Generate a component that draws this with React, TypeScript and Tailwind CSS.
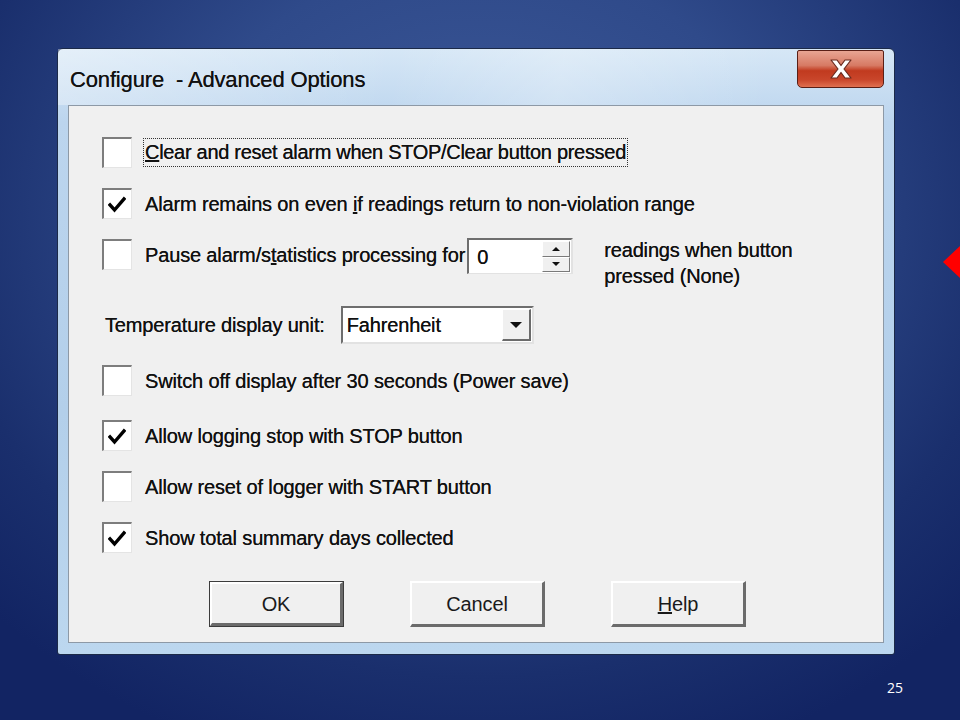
import React from "react";

const FONT = "font-['Liberation_Sans',Arial,sans-serif]";

function Check() {
    return (
        <svg width="18" height="17" viewBox="0 0 18 17" className="absolute left-[4px] top-[6px]">
            <path d="M2 9 L6.5 14 L16 3" fill="none" stroke="#000" strokeWidth="3.4" strokeLinecap="square" strokeLinejoin="miter" />
        </svg>
    );
}

function CheckBox({ checked }: { checked?: boolean }) {
    return (
        <div className="relative w-[30px] h-[31px] shrink-0 bg-white border-l-2 border-t-2 border-[#7d7d7d] border-r border-b border-r-[#e4e4e4] border-b-[#e4e4e4]">
            {checked && <Check />}
        </div>
    );
}

function Row({ checked, top, children }: { checked?: boolean; top: string; children: React.ReactNode }) {
    return (
        <div className={`flex items-center gap-[13px] ${top}`}>
            <CheckBox checked={checked} />
            {children}
        </div>
    );
}

function PushButton({ label, isDefault }: { label: React.ReactNode; isDefault?: boolean }) {
    return (
        <div
            className={`w-[135px] h-[46px] flex items-center justify-center bg-[#f0f0f0] text-[20px] text-[#1a1a1a] ${
                isDefault ? "border border-[#3c3c3c]" : ""
            }`}
        >
            <div className="w-full h-full flex items-center justify-center border-t-2 border-l-2 border-white border-r-[3px] border-b-[3px] border-r-[#6b6b6b] border-b-[#6b6b6b]">
                {label}
            </div>
        </div>
    );
}

function Triangle({ dir, size = 6 }: { dir: "up" | "down"; size?: number }) {
    return (
        <svg width={size * 2} height={size} viewBox="0 0 12 6">
            {dir === "down" ? <path d="M0 0 H12 L6 6 Z" fill="#111" /> : <path d="M0 6 H12 L6 0 Z" fill="#111" />}
        </svg>
    );
}

export default function App() {
    return (
        <div
            className={`relative w-[960px] h-[720px] overflow-hidden pt-[48px] pl-[57px] bg-[radial-gradient(ellipse_70%_80%_at_50%_30%,#3e5a9a_0%,#2f4a8a_45%,#1a2f6d_80%,#122463_100%)] ${FONT}`}
        >
            {/* dialog window */}
            <div className="w-[838px] h-[607px] flex flex-col rounded-t-[6px] rounded-b-[3px] border border-[#1c2a48] bg-[linear-gradient(180deg,#d6e7f6_0%,#bcd5ee_12%,#b3cfea_60%,#bcd7ef_100%)]">
                {/* title bar */}
                <div className="h-[56px] flex items-start justify-between pl-[12px] pr-[10px] bg-[linear-gradient(100deg,rgba(255,255,255,0.35)_0%,rgba(255,255,255,0)_40%,rgba(255,255,255,0.25)_60%,rgba(255,255,255,0)_85%)]">
                    <div className="pt-[14px] text-[22px] text-[#111] tracking-[-0.15px] whitespace-pre [text-shadow:0_0_0.5px_#333]">Configure  - Advanced Options</div>
                    <div className="mt-[1px] w-[87px] h-[38px] rounded-b-[5px] rounded-t-[2px] border border-[#5a1f16] bg-[linear-gradient(180deg,#e8a593_0%,#d77a64_40%,#c13a1f_55%,#c9462b_80%,#e07050_100%)] flex items-center justify-center">
                        <svg width="26" height="22" viewBox="0 0 26 22">
                            <path d="M3 2 L9 2 L13 7.5 L17 2 L23 2 L16 11 L23 20 L17 20 L13 14.5 L9 20 L3 20 L10 11 Z" fill="#fff" stroke="#6a2a1f" strokeWidth="1.2" strokeLinejoin="round" />
                        </svg>
                    </div>
                </div>

                {/* client area */}
                <div className="flex-1 mx-[10px] mb-[11px] bg-[#f0f0f0] border border-[#8d99a6] flex flex-col pl-[33px] text-[20px] text-[#111] tracking-[-0.15px] [text-shadow:0_0_0.6px_#222]">
                    <Row top="mt-[31px]">
                        <span className="-ml-[2px] border border-dotted border-[#333] px-[1px] leading-[27px] tracking-[-0.3px]">
                            <u>C</u>lear and reset alarm when STOP/Clear button pressed
                        </span>
                    </Row>
                    <Row checked top="mt-[20px]">
                        <span>
                            Alarm remains on even <u>i</u>f readings return to non-violation range
                        </span>
                    </Row>
                    <div className="flex items-start mt-[20px]">
                        <div className="flex items-center gap-[13px]">
                            <CheckBox />
                            <span>
                                Pause alarm/s<u>t</u>atistics processing for
                            </span>
                        </div>
                        {/* spinner */}
                        <div className="ml-[2px] -mt-[1px] w-[106px] h-[36px] flex bg-white border-l-2 border-t-2 border-[#6e6e6e] border-r-2 border-b border-r-[#e2e2e2] border-b-[#e2e2e2]">
                            <div className="flex-1 pl-[8px] leading-[34px]">0</div>
                            <div className="w-[28px] flex flex-col my-[1px] mr-[1px]">
                                <div className="flex-1 flex items-center justify-center bg-[#f0f0f0] border-t border-l border-white border-b border-r border-b-[#7a7a7a] border-r-[#7a7a7a]">
                                    <Triangle dir="up" size={4} />
                                </div>
                                <div className="flex-1 flex items-center justify-center bg-[#f0f0f0] border-t border-l border-white border-b border-r border-b-[#7a7a7a] border-r-[#7a7a7a]">
                                    <Triangle dir="down" size={4} />
                                </div>
                            </div>
                        </div>
                        <div className="ml-[31px] -mt-[2px] leading-[26px]">
                            readings when button
                            <br />
                            pressed (None)
                        </div>
                    </div>
                    <div className="flex items-center mt-[17px] -ml-[31px] pl-[34px]">
                        <span>Temperature display unit:</span>
                        <div className="ml-[16px] w-[193px] h-[38px] flex bg-white border-l-2 border-t-2 border-[#6e6e6e] border-r-2 border-b-2 border-r-[#e2e2e2] border-b-[#e2e2e2]">
                            <div className="flex-1 pl-[4px] leading-[34px]">Fahrenheit</div>
                            <div className="w-[29px] my-[1px] mr-[1px] flex items-center justify-center bg-[#f0f0f0] border-t border-l border-white border-b-2 border-r-2 border-b-[#6b6b6b] border-r-[#6b6b6b]">
                                <Triangle dir="down" size={6} />
                            </div>
                        </div>
                    </div>
                    <Row top="mt-[21px]">
                        <span>Switch off display after 30 seconds (Power save)</span>
                    </Row>
                    <Row checked top="mt-[24px]">
                        <span>Allow logging stop with STOP button</span>
                    </Row>
                    <Row top="mt-[20px]">
                        <span>Allow reset of logger with START button</span>
                    </Row>
                    <Row checked top="mt-[20px]">
                        <span>Show total summary days collected</span>
                    </Row>
                    <div className="flex gap-[66px] mt-[28px] ml-[107px] [text-shadow:none]">
                        <PushButton label="OK" isDefault />
                        <PushButton label="Cancel" />
                        <PushButton
                            label={
                                <span>
                                    <u>H</u>elp
                                </span>
                            }
                        />
                    </div>
                </div>
            </div>

            {/* slide number */}
            <div className="absolute left-[887px] top-[677px] text-[14px] text-white font-['Open_Sans',sans-serif]">25</div>

            {/* red pointer arrow, partly off-slide */}
            <svg className="absolute left-[943px] top-[246px]" width="17" height="32" viewBox="0 0 17 32">
                <path d="M0 16 L17 0 L17 32 Z" fill="#ff0000" />
            </svg>
        </div>
    );
}
